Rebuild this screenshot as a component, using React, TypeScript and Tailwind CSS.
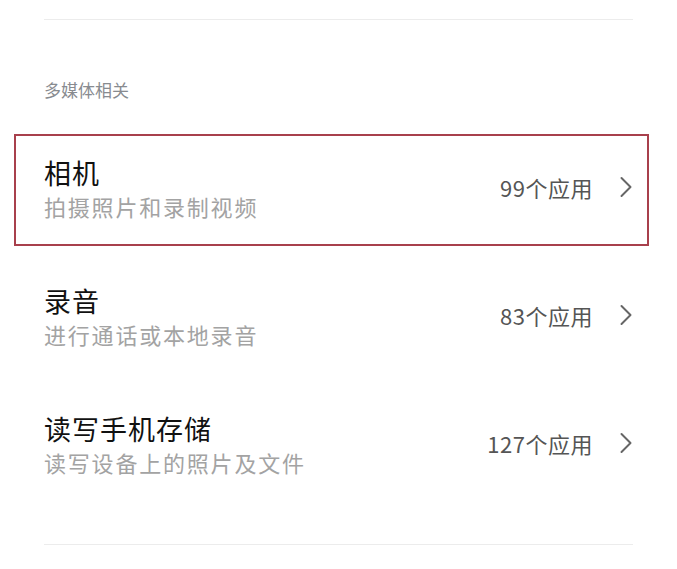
const items = [
  { title: "相机", desc: "拍摄照片和录制视频", count: "99个应用", active: true },
  { title: "录音", desc: "进行通话或本地录音", count: "83个应用", active: false },
  { title: "读写手机存储", desc: "读写设备上的照片及文件", count: "127个应用", active: false },
];

const Chevron = () => (
  <svg width="14" height="22" viewBox="0 0 14 22" fill="none">
    <path d="M2.5 2 L11.5 11 L2.5 20" stroke="#666" strokeWidth="2" strokeLinecap="round" strokeLinejoin="round" />
  </svg>
);

export default function App() {
  return (
    <div
      className="min-h-[569px] w-[677px] bg-white px-[44px]"
      style={{ fontFamily: '"Noto Sans CJK SC", "Noto Sans", sans-serif' }}
    >
      <div className="h-[19px]" />
      <div className="h-px bg-[#ececec]" />
      <div className="flex h-[106px] items-center pt-[34px] text-[17px] text-[#888b90]">多媒体相关</div>
      {items.map((item) => (
        <div key={item.title} className="flex h-[128px] items-center">
          <div
            className={`flex h-[112px] flex-1 items-center justify-between ${
              item.active
                ? "-ml-[30px] -mr-[16px] border-2 border-[#a8404c] pl-[28px] pr-[14px]"
                : ""
            }`}
          >
            <div className="-mt-[4px] flex flex-col">
              <span className="text-[27px] leading-[36px] tracking-[1px] text-[#111]">{item.title}</span>
              <span className="text-[22px] leading-[30px] tracking-[1.8px] text-[#a3a3a3]">{item.desc}</span>
            </div>
            <div className="-mt-[6px] flex items-center gap-[26px]">
              <span className="text-[22px] tracking-[0.5px] text-[#555]">{item.count}</span>
              <Chevron />
            </div>
          </div>
        </div>
      ))}
      <div className="h-[34px]" />
      <div className="h-px bg-[#ececec]" />
    </div>
  );
}
